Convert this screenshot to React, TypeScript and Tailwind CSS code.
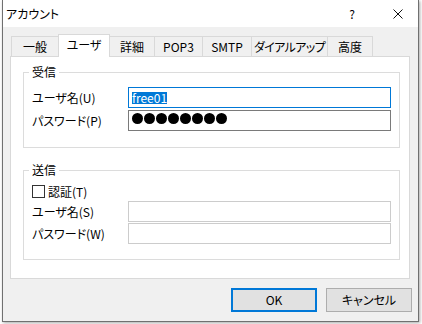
import React from "react";

function Tab({ label, className }: { label: string; className: string }) {
  return (
    <div className={"flex items-center justify-center border-[#d9d9d9] whitespace-nowrap " + className}>
      <span className="leading-[14px]">{label}</span>
    </div>
  );
}

function Input({ className, children }: { className: string; children?: React.ReactNode }) {
  return (
    <div className={"w-[263px] h-[21px] border bg-white flex items-center pl-[3px] " + className}>
      {children}
    </div>
  );
}

export default function App() {
  return (
    <div className="w-[422px] h-[324px] bg-white font-['Noto_Sans_CJK_JP',sans-serif] text-[12px] text-black [font-feature-settings:'palt']">
      <div className="ml-[2px] w-[417px] h-[322px] border-x border-b border-[#707070] flex flex-col shadow-[1px_1px_3px_rgba(0,0,0,0.35)]">
        {/* title bar */}
        <div className="h-[27px] shrink-0 bg-white flex items-center pl-[3px]">
          <span className="leading-[14px]">アカウント</span>
          <span className="ml-auto w-[10px] text-center leading-[14px] mr-[36px]">?</span>
          <svg width="10" height="10" viewBox="0 0 10 10" className="mr-[15px]">
            <path d="M0.5 0.5 L9.5 9.5 M9.5 0.5 L0.5 9.5" stroke="#111" strokeWidth="1" fill="none" />
          </svg>
        </div>

        {/* client */}
        <div className="flex-1 bg-[#f0f0f0] pt-[7px] flex flex-col">
          {/* tabs */}
          <div className="relative z-10 h-[22px] ml-[8px] flex items-end">
            <Tab label="一般" className="w-[47px] h-[20px] border-l border-t" />
            <Tab label="ユーザ" className="w-[52px] h-[23px] -mb-[1px] border-l border-t border-r bg-white pb-[2px]" />
            <Tab label="詳細" className="w-[45px] h-[20px] border-t border-r" />
            <Tab label="POP3" className="w-[48px] h-[20px] border-t border-r" />
            <Tab label="SMTP" className="w-[49px] h-[20px] border-t border-r" />
            <Tab label="ダイアルアップ" className="w-[76px] h-[20px] border-t border-r tracking-[-0.6px]" />
            <Tab label="高度" className="w-[45px] h-[20px] border-t border-r" />
          </div>

          {/* panel */}
          <div className="ml-[7px] w-[400px] h-[223px] border border-[#d9d9d9] bg-white pt-[15px] pl-[12px]">
            {/* 受信 */}
            <div className="relative w-[377px] h-[76px] border border-[#dcdcdc] pt-[14px] pl-[8px] flex flex-col gap-[2px]">
              <span className="absolute -top-[8px] left-[5px] px-[3px] bg-white leading-[14px]">受信</span>
              <div className="flex items-center">
                <span className="w-[96px] leading-[14px]">ユーザ名(U)</span>
                <Input className="border-[#0078d7]">
                  <span className="bg-[#0078d7] text-white leading-[12px] h-[12px] inline-block">free01</span>
                </Input>
              </div>
              <div className="flex items-center">
                <span className="w-[96px] leading-[14px]">パスワード(P)</span>
                <Input className="border-[#7a7a7a] pb-[4px] gap-[1px]">
                  <span className="w-[11px] h-[11px] rounded-full bg-black" />
                  <span className="w-[11px] h-[11px] rounded-full bg-black" />
                  <span className="w-[11px] h-[11px] rounded-full bg-black" />
                  <span className="w-[11px] h-[11px] rounded-full bg-black" />
                  <span className="w-[11px] h-[11px] rounded-full bg-black" />
                  <span className="w-[11px] h-[11px] rounded-full bg-black" />
                  <span className="w-[11px] h-[11px] rounded-full bg-black" />
                  <span className="w-[11px] h-[11px] rounded-full bg-black" />
                </Input>
              </div>
            </div>

            {/* 送信 */}
            <div className="relative mt-[22px] w-[377px] h-[90px] border border-[#dcdcdc] pt-[14px] pl-[8px] flex flex-col">
              <span className="absolute -top-[8px] left-[5px] px-[3px] bg-white leading-[14px]">送信</span>
              <div className="flex items-center h-[13px] gap-[3px]">
                <span className="w-[13px] h-[13px] border border-[#333333] bg-white" />
                <span className="leading-[14px]">認証(T)</span>
              </div>
              <div className="flex items-center mt-[3px]">
                <span className="w-[96px] leading-[14px]">ユーザ名(S)</span>
                <Input className="border-[#cccccc]" />
              </div>
              <div className="flex items-center mt-[1px]">
                <span className="w-[96px] leading-[14px]">パスワード(W)</span>
                <Input className="border-[#cccccc]" />
              </div>
            </div>
          </div>

          {/* buttons */}
          <div className="mt-[9px] flex justify-end gap-[9px] pr-[6px]">
            <button className="w-[86px] h-[24px] border-2 border-[#0078d7] bg-[#e1e1e1] flex items-center justify-center leading-[14px]">
              OK
            </button>
            <button className="w-[86px] h-[24px] border border-[#adadad] bg-[#e1e1e1] flex items-center justify-center leading-[14px]">
              キャンセル
            </button>
          </div>
        </div>
      </div>
    </div>
  );
}
